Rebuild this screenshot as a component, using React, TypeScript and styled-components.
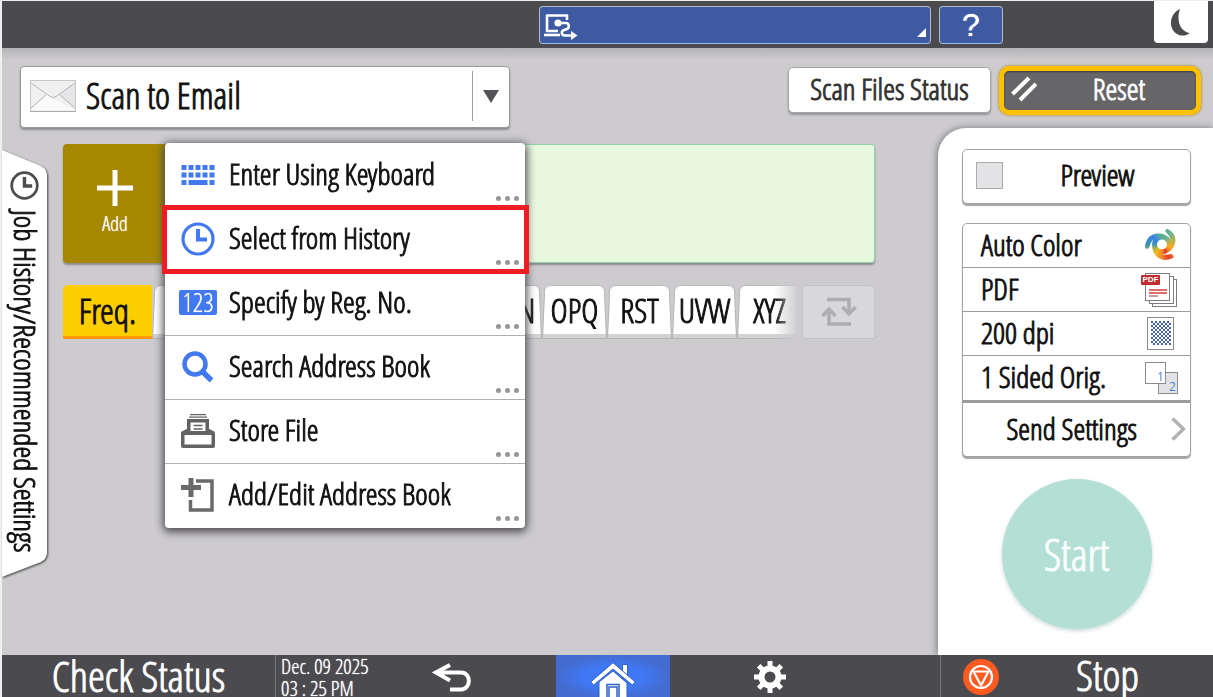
import React from "react";
import styled, { createGlobalStyle } from "styled-components";

const FONT = `"Open Sans Condensed Light", "Roboto Condensed", "Open Sans", sans-serif`;
const BAR = "#4b4a4e";
const BLUE = "#4278f0";

const Global = createGlobalStyle`
  *, *::before, *::after { box-sizing: border-box; }
  body { margin: 0; background: #eef0ef; }
  button, select, input { font: inherit; color: inherit; margin: 0; }
  button { padding: 0; border: 0; background: none; cursor: pointer; }
`;

const Page = styled.div`
  display: flex;
  flex-direction: column;
  height: 100vh;
  min-height: 600px;
  padding: 1px 0 0 2px;
  overflow: hidden;
  font-family: ${FONT};
  font-size: 30px;
  line-height: 40px;
  color: #111;
  -webkit-text-stroke: 1px currentColor;
`;

/* Small labels get a softer weight than the large ones. */
const smallText = `
  -webkit-text-stroke: 0;
  text-shadow: 0 0 1px currentColor;
`;

/* ---------- top bar ---------- */
const TopBar = styled.header`
  display: grid;
  grid-template-columns: 1fr 392px 64px 202px;
  column-gap: 8px;
  align-items: start;
  height: 47px;
  flex: none;
  background: ${BAR};
`;

const BlueButton = styled.button<{ $wide?: boolean }>`
  grid-column: ${(p) => (p.$wide ? 2 : 3)};
  display: flex;
  align-items: ${(p) => (p.$wide ? "stretch" : "center")};
  justify-content: ${(p) => (p.$wide ? "space-between" : "center")};
  height: 38px;
  margin-top: 5px;
  padding: 0 4px;
  border: 1px solid #b9b9c4;
  border-bottom-color: #9db9ee;
  border-radius: 4px;
  background: #3d5aa3;
  color: #fff;
`;

const HelpMark = styled.span`
  font-family: "Liberation Sans", Arial, sans-serif;
  font-size: 32px;
  line-height: 36px;
  ${smallText}
`;

const Corner = styled.span`
  align-self: flex-end;
  width: 9px;
  height: 9px;
  margin-bottom: 6px;
  background: #fff;
  clip-path: polygon(100% 0, 100% 100%, 0 100%);
`;

const SleepButton = styled.button`
  justify-self: end;
  display: grid;
  place-items: center;
  width: 54px;
  height: 42px;
  margin-right: 5px;
  border-radius: 0 0 4px 4px;
  background: #fff;
  color: ${BAR};
`;

/* ---------- main area ---------- */
const Main = styled.main`
  flex: 1;
  min-height: 0;
  display: grid;
  grid-template-columns: minmax(0, 1fr) 275px;
  grid-template-rows: 80px minmax(0, 1fr);
  background: linear-gradient(#b5b4b6, #cdcbce 12px);
`;

const Header = styled.div`
  grid-column: 1 / -1;
  display: flex;
  align-items: flex-start;
  gap: 8px;
  padding: 18px 12px 0 18px;
`;

const ModePicker = styled.label`
  display: flex;
  align-items: center;
  width: 490px;
  height: 62px;
  margin-right: auto;
  padding: 0 0 2px 9px;
  border: 1px solid #98979a;
  border-radius: 4px;
  background: #fff;
  box-shadow: 0 2px 2px #8e8d90;
`;

const ModeSelect = styled.select`
  flex: 1;
  align-self: stretch;
  margin-left: 10px;
  padding: 0;
  border: 0;
  appearance: none;
  background: none;
  font-size: 36px;
`;

const PickerArrow = styled.span`
  display: grid;
  place-items: center;
  width: 37px;
  height: 50px;
  border-left: 1px solid #9c9b9e;
  pointer-events: none;
`;

const StatusButton = styled.button`
  width: 203px;
  height: 46px;
  margin-top: 1px;
  padding-bottom: 3px;
  border: 1px solid #a4a3a6;
  border-radius: 5px;
  background: #fff;
  color: #333;
  box-shadow: 0 2px 2px #979699;
`;

const ResetButton = styled.button`
  display: flex;
  align-items: center;
  width: 202px;
  height: 49px;
  padding: 0 7px 4px;
  border: 5px solid #ffc000;
  border-radius: 10px;
  background: #666567;
  color: #fff;
  box-shadow: 0 0 3px #a07c10, inset 0 1px 2px #3c3c3e;
`;

const ResetLabel = styled.span`
  flex: 1;
  padding-left: 12px;
  text-align: center;
`;

const Work = styled.div`
  display: flex;
  align-items: flex-start;
  min-width: 0;
`;

/* ---------- side tab ---------- */
const SideShadow = styled.div`
  flex: none;
  width: 45px;
  margin-top: 22px;
  filter: drop-shadow(1px 1px 1px #444);
`;

const SideTab = styled.button`
  display: flex;
  align-items: center;
  gap: 10px;
  width: 45px;
  height: 427px;
  padding-top: 21px;
  writing-mode: vertical-rl;
  background: #fff;
  clip-path: polygon(0 0, 39px 16px, 43px 19px, 45px 24px, 45px 404px, 43px 409px, 39px 412px, 0 427px);
`;

/* ---------- destination area ---------- */
const Center = styled.section`
  position: relative;
  flex: 1;
  min-width: 0;
  margin: 16px 63px 0 16px;
`;

const Destination = styled.div`
  display: flex;
  height: 119px;
  border-radius: 4px;
  box-shadow: 0 2px 2px #8c8b8e;
`;

const AddButton = styled.button`
  display: flex;
  flex-direction: column;
  align-items: center;
  width: 104px;
  padding-top: 26px;
  border-radius: 4px 0 0 4px;
  background: #a58800;
  color: #fff;
  font-size: 20px;
  line-height: 36px;
  ${smallText}
`;

const Recipient = styled.div`
  flex: 1;
  border: 1px solid #92cfae;
  border-left: 0;
  border-radius: 0 4px 4px 0;
  background: #e8f8df;
`;

const Tabs = styled.nav`
  display: flex;
  align-items: flex-end;
  height: 54px;
  margin-top: 22px;
  font-size: 33px;
`;

const FreqTab = styled.button`
  flex: none;
  width: 89px;
  height: 54px;
  border-bottom: 3px solid #ff9500;
  border-radius: 5px 0 0 0;
  background: #ffce00;
  font-size: 35px;
  line-height: 51px;
`;

const TabStrip = styled.div`
  display: flex;
  flex: 1;
  min-width: 0;
  height: 54px;
  overflow: hidden;
  mask-image: linear-gradient(to left, transparent 4px, #000 28px);
`;

const LetterTab = styled.button`
  position: relative;
  flex: none;
  width: 65px;
  height: 54px;
  padding-bottom: 3px;
  isolation: isolate;
  line-height: 50px;
  &::before {
    content: "";
    position: absolute;
    inset: -5px 0 0;
    z-index: -1;
    border: 1px solid #b4b3b6;
    border-radius: 7px 7px 0 0;
    background: linear-gradient(to top, #d3d2d3 4px, #fff 4px);
    transform: perspective(100px) rotateX(8deg);
    transform-origin: bottom;
  }
`;

const SwapButton = styled.button`
  display: grid;
  place-items: center;
  flex: none;
  width: 73px;
  height: 54px;
  border: 1px solid #c3c2c4;
  border-radius: 0 5px 0 0;
  background: #d8d7d9;
  color: #aeadb0;
`;

/* ---------- pop-up menu ---------- */
const Menu = styled.ul`
  position: absolute;
  top: -1px;
  left: 102px;
  z-index: 2;
  width: 360px;
  margin: 0;
  padding: 1px 0;
  list-style: none;
  border-radius: 4px;
  background: #fff;
  box-shadow: 0 2px 8px 2px #4d4c50;
`;

const MenuItem = styled.li<{ $marked?: boolean }>`
  position: relative;
  &:not(:last-child) { border-bottom: 1px solid #b1b0b2; }
  ${(p) => p.$marked && `
    &::after {
      content: "";
      position: absolute;
      inset: -3px -4px -3px -3px;
      border: 5px solid #ee1c23;
      pointer-events: none;
    }
  `}
`;

const MenuButton = styled.button`
  display: flex;
  align-items: center;
  gap: 12px;
  width: 100%;
  height: 63px;
  padding: 0 6px 2px 14px;
  text-align: left;
`;

const MenuIcon = styled.span`
  display: grid;
  place-items: center;
  width: 38px;
`;

const MenuLabel = styled.span`
  flex: 1;
  padding-bottom: 2px;
`;

const Dots = styled.span`
  align-self: flex-end;
  display: flex;
  gap: 4px;
  margin-bottom: 4px;
  &::before, &::after, & > i {
    content: "";
    width: 5px;
    height: 5px;
    border-radius: 50%;
    background: #97969a;
  }
`;

const NumberBadge = styled.span`
  width: 38px;
  height: 25px;
  border-radius: 2px;
  background: ${BLUE};
  color: #fff;
  font-size: 26px;
  line-height: 25px;
  text-align: center;
  ${smallText}
`;

/* ---------- right panel ---------- */
const Panel = styled.aside`
  display: flex;
  flex-direction: column;
  align-items: stretch;
  padding: 21px 22px 0 24px;
  border-radius: 28px 0 0 0;
  background: #fff;
  box-shadow: -1px 0 7px #77767a;
`;

const cardFrame = `
  border: 1px solid #a3a2a5;
  border-radius: 5px;
  background: #fff;
  box-shadow: 0 2px 1px #a3a2a5;
`;

const PreviewBox = styled.label`
  display: flex;
  align-items: center;
  height: 55px;
  padding: 0 13px 2px;
  ${cardFrame}
`;

const PreviewCheck = styled.input`
  appearance: none;
  width: 27px;
  height: 27px;
  border: 1px solid #aaa9ac;
  background: #e3e2e4;
`;

const PreviewLabel = styled.span`
  flex: 1;
  padding: 0 0 2px 15px;
  text-align: center;
`;

const Settings = styled.div`
  display: flex;
  flex-direction: column;
  margin-top: 19px;
  ${cardFrame}
`;

const SettingRow = styled.button<{ $last?: boolean }>`
  display: flex;
  align-items: center;
  justify-content: space-between;
  height: ${(p) => (p.$last ? 47 : 44)}px;
  padding: 0 11px 0 18px;
  border-bottom: ${(p) => (p.$last ? 3 : 1)}px solid #9c9b9e;
  & > span:first-child { padding-bottom: 2px; }
`;

const SendRow = styled.button`
  display: flex;
  align-items: center;
  justify-content: flex-end;
  gap: 34px;
  height: 53px;
  padding: 0 4px 2px 0;
`;

const StartButton = styled.button`
  align-self: center;
  width: 150px;
  height: 150px;
  margin-top: 22px;
  border-radius: 50%;
  background: #b4dfd5;
  color: #fafefd;
  font-size: 44px;
  box-shadow: 0 2px 4px #c9dcd8;
`;

/* ---------- bottom bar ---------- */
const BottomBar = styled.footer`
  flex: none;
  display: grid;
  grid-template-columns: 274px 280fr 114px 270fr 273px;
  height: 42px;
  overflow: hidden;
  background: ${BAR};
  color: #fff;
`;

const CheckStatus = styled.button`
  padding-bottom: 2px;
  border-right: 1px solid #777679;
  font-size: 43px;
  line-height: 40px;
`;

const TimeAndBack = styled.div`
  display: flex;
  align-items: center;
  padding-left: 5px;
`;

const Clock = styled.time`
  flex: none;
  width: 141px;
  font-size: 21px;
  line-height: 22px;
  white-space: pre-line;
  ${smallText}
`;

const IconButton = styled.button`
  display: grid;
  place-items: center;
  height: 42px;
  padding: 2px 10px 0;
`;

const HomeButton = styled.button`
  display: grid;
  place-items: end center;
  background: radial-gradient(ellipse, #3f78f5 35%, #446cd0 70%);
`;

const GearCell = styled.div`
  display: grid;
  grid-template-columns: 200px;
  justify-content: start;
`;

const StopButton = styled.button`
  display: flex;
  align-items: center;
  gap: 77px;
  padding: 0 0 0 22px;
  border-left: 1px solid #777679;
  font-size: 43px;
  line-height: 38px;
  & > span { padding-bottom: 4px; }
`;

/* ---------- icons ---------- */
const ClockIcon = ({ size, color }: { size: number; color: string }) => (
  <svg width={size} height={size} viewBox="0 0 34 34" fill="none" stroke={color}>
    <circle cx="17" cy="17" r="15" strokeWidth="3.2" />
    <path d="M17 7v10.500h9" strokeWidth="4" />
  </svg>
);

const NetworkIcon = () => (
  <svg width="36" height="36" viewBox="0 0 36 36" fill="none" stroke="#fff">
    <path d="M23 13v-4.500H3v15.500h11" strokeWidth="2.600" strokeLinejoin="round" />
    <path d="M0 28h16" strokeWidth="2.600" />
    <circle cx="14" cy="16" r="3.600" fill="#fff" stroke="none" />
    <path d="M14 16h8c3.500 0 3.500 5 1 6l-3 1c-3 1-3 5.500 1 5.500h7" strokeWidth="2.600" />
    <path d="M27 24l6.500 4.500-6.500 4.500z" fill="#fff" stroke="none" />
  </svg>
);

const MoonIcon = () => (
  <svg width="20" height="27" viewBox="0 0 20 27">
    <path d="M9 0C-2 5-3 20 6 25c4 2.500 9 2 13-1C9 23 5 11 9 0z" fill={BAR} />
  </svg>
);

const EnvelopeIcon = () => (
  <svg width="46" height="32" viewBox="0 0 46 32" stroke="#b4b3b6" fill="none">
    <rect x=".5" y=".5" width="45" height="31" fill="#f0f0f1" stroke="#c8c7ca" />
    <path d="M1 30L17 14l7 5 21 11z" fill="#fafafa" stroke="none" />
    <path d="M29 15l16 14V3z" fill="#e6e6e8" stroke="none" />
    <path d="M1 3l19 13.500q3 2 6 0L45 3M1 28l15-13M45 28L30 15" />
    <path d="M0 31.500h46" stroke="#aaa" />
  </svg>
);

const StripesIcon = () => (
  <svg width="26" height="26" viewBox="0 0 26 26" stroke="#fff" strokeWidth="4">
    <path d="M1.500 18L18 2M9 24L25 8" />
  </svg>
);

const PlusIcon = () => (
  <svg width="36" height="36" viewBox="0 0 36 36" stroke="#fff" strokeWidth="5">
    <path d="M18 0v36M0 18h36" />
  </svg>
);

const SwapIcon = () => (
  <svg width="36" height="30" viewBox="0 0 36 30" fill="none" stroke="currentColor" strokeWidth="3.500">
    <path d="M6 2.500h22v14M21.500 10l6.500 7 6.500-7M30 27H8V12M1.500 19L8 12l6.500 7" />
  </svg>
);

const KeyboardIcon = () => {
  const xs = [0, 7, 14, 21, 28];
  return (
    <svg width="34" height="20" viewBox="0 0 33 20" fill={BLUE}>
      {xs.map((x) => <rect key={x} x={x} y="0" width="5" height="5" />)}
      {xs.map((x) => <rect key={x} x={x} y="7.500" width="5" height="5" />)}
      <rect x="0" y="15" width="5" height="5" />
      <rect x="7" y="15" width="19" height="5" />
      <rect x="28" y="15" width="5" height="5" />
    </svg>
  );
};

const SearchIcon = () => (
  <svg width="32" height="32" viewBox="0 0 32 32" fill="none" stroke={BLUE}>
    <circle cx="13" cy="13" r="10.500" strokeWidth="4.500" />
    <path d="M20 20l9.500 9.500" strokeWidth="5.500" />
  </svg>
);

const StoreIcon = () => (
  <svg width="34" height="34" viewBox="0 0 34 34" fill="none" stroke="#636265">
    <path d="M9 .700h16M8 3.200h18" strokeWidth="1.300" />
    <path d="M1 20c0-3 2-4 5-5V5h22v10c3 1 5 2 5 5z" fill="#636265" stroke="none" />
    <rect x="0" y="17" width="34" height="17" rx="2" fill="#636265" stroke="none" />
    <rect x="3.500" y="21" width="27" height="9.500" fill="#fff" stroke="none" />
    <path d="M9.500 8.500h15v8.500h-15z" fill="#fff" stroke="none" />
    <path d="M12.500 11.500h9M12.500 15h9" strokeWidth="1.300" />
  </svg>
);

const AddPageIcon = () => (
  <svg width="34" height="34" viewBox="0 0 34 34" fill="none" stroke="#6a696c">
    <path d="M10 0v19M0 9.500h20" strokeWidth="5" />
    <path d="M15 3h16v29H9.500V22" strokeWidth="3.500" />
  </svg>
);

const ColorWheelIcon = styled.span`
  width: 34px;
  height: 34px;
  background: conic-gradient(
    from 0deg at 17px 16px,
    #58ae78, #5fb3a0 30deg, #a9b35c 60deg, #f6a81a 100deg, #f58a20 125deg, #e03a2c 150deg,
    #f0902a 185deg, #f2b822 215deg, #bdb836 240deg, #3f97b0 270deg, #3a7fe6 310deg, #4aa0c0 335deg, #58ae78
  );
  clip-path: path("M7 16a10 10 0 1 1 20 0a10 10 0 1 1 -20 0z M12 16a5 5 0 1 0 10 0a5 5 0 1 0 -10 0z M0 20C0 9 7 4 15 5C19 5 23 8 25 12L17 9C10 7 6 12 4 20z M22 0C31.600 4.800 32.400 13.300 27.500 19.800C25.500 23.200 20.900 25.200 16.500 24.900L23.100 19.500C28.300 14.400 26 8.500 20 2.700z M29 28.700C19.400 34.200 11.600 30.700 8.500 23.200C6.500 19.800 7.100 14.800 9.500 11.100L10.900 19.500C12.700 26.600 19 27.500 27 25.300z");
`;

const PdfTag = styled.span`
  position: absolute;
  top: 4px;
  left: 0;
  width: 19px;
  height: 10px;
  border-radius: 1px;
  background: #c22c30;
  color: #fff;
  font: bold 8px/10px "Liberation Sans", Arial, sans-serif;
  text-align: center;
  -webkit-text-stroke: 0;
`;

const PdfBox = styled.span`
  position: relative;
  display: block;
  width: 38px;
  height: 38px;
`;

const PdfIcon = () => (
  <PdfBox>
    <svg width="38" height="38" viewBox="0 0 38 38" fill="#fff" stroke="#7d7c80">
      <rect x="11.500" y="8.500" width="24" height="27" />
      <rect x="8.500" y="5.500" width="24" height="27" />
      <rect x="4.500" y="2.500" width="24" height="27" />
      <path d="M8 19h18M8 22h18" stroke="#e26b6b" strokeWidth="2" />
      <path d="M8 25h9" stroke="#8c3a3a" />
    </svg>
    <PdfTag>PDF</PdfTag>
  </PdfBox>
);

const DotsIcon = () => (
  <svg width="32" height="33" viewBox="0 0 32 33">
    <rect x=".500" y=".500" width="26" height="32" fill="#fff" stroke="#8b8a8e" />
    {Array.from({ length: 12 }, (_, r) =>
      Array.from({ length: 10 }, (_, c) =>
        (r + c) % 2 === 0 ? <rect key={`${r}-${c}`} x={4 + c * 2} y={4 + r * 2} width="2" height="2" fill="#3f5fae" /> : null
      )
    )}
  </svg>
);

const SidedIcon = () => (
  <svg width="34" height="34" viewBox="0 0 34 34" stroke="#8b8a8e">
    <rect x="13.500" y="11.500" width="19" height="21" fill="#e3e2e4" />
    <rect x=".500" y="1.500" width="20" height="21" fill="#fff" />
    <g fill="#4a86dc" stroke="none" fontFamily="Open Sans, sans-serif" fontSize="12" style={{ WebkitTextStroke: 0 }}>
      <text x="12" y="20">1</text>
      <text x="24" y="30">2</text>
    </g>
  </svg>
);

const ChevronIcon = () => (
  <svg width="15" height="24" viewBox="0 0 15 24" fill="none" stroke="#b2b1b4" strokeWidth="3.500">
    <path d="M1.500 1.500L12.500 12 1.500 22.500" />
  </svg>
);

const BackIcon = () => (
  <svg width="40" height="30" viewBox="0 0 40 30" fill="none" stroke="#fff" strokeWidth="4">
    <path d="M18 2L4 9.500l14 8M5 9.500h24c11 0 10 17 0 17H18" />
  </svg>
);

const HomeIcon = () => (
  <svg width="46" height="37" viewBox="0 0 46 37" fill="#fff" stroke="#2f62c8">
    <path d="M32.500 2.500h5v14h-5z" />
    <path d="M9 20L23 9l14 12v15H9z" />
    <path d="M.700 20L23 .700 45.300 20l-3 3L23 7 3.700 23z" />
    <path d="M17 36V22.500h12V36" strokeWidth="1.500" />
    <path d="M19 36V25h8v11" strokeWidth="1.500" />
  </svg>
);

const GearIcon = () => (
  <svg width="34" height="34" viewBox="0 0 34 34" stroke="#fff" fill="none">
    <circle cx="17" cy="17" r="8.500" strokeWidth="6" />
    {[0, 45, 90, 135].map((a) => (
      <path key={a} d="M17 1v6M17 27v6" strokeWidth="5" transform={`rotate(${a} 17 17)`} />
    ))}
  </svg>
);

const StopIcon = () => (
  <svg width="36" height="36" viewBox="0 0 36 36" fill="none" stroke="#fff" strokeWidth="2.200">
    <circle cx="18" cy="18" r="18" fill="#ff5a20" stroke="none" />
    <circle cx="18" cy="18" r="11" />
    <path d="M10.500 12.500h15L18 26.500z" strokeLinejoin="round" />
  </svg>
);

const menu = [
  { label: "Enter Using Keyboard", icon: <KeyboardIcon /> },
  { label: "Select from History", icon: <ClockIcon size={34} color={BLUE} />, marked: true },
  { label: "Specify by Reg. No.", icon: <NumberBadge>123</NumberBadge> },
  { label: "Search Address Book", icon: <SearchIcon /> },
  { label: "Store File", icon: <StoreIcon /> },
  { label: "Add/Edit Address Book", icon: <AddPageIcon /> },
];

const settings = [
  { label: "Auto Color", icon: <ColorWheelIcon /> },
  { label: "PDF", icon: <PdfIcon /> },
  { label: "200 dpi", icon: <DotsIcon /> },
  { label: "1 Sided Orig.", icon: <SidedIcon /> },
];

/* The first tabs lie under the open menu and show no letters meanwhile. */
const letters = [
  { name: "AB", covered: true },
  { name: "CD", covered: true },
  { name: "EF", covered: true },
  { name: "GH", covered: true },
  { name: "IJK", covered: true },
  { name: "LMN" },
  { name: "OPQ" },
  { name: "RST" },
  { name: "UVW" },
  { name: "XYZ" },
];

export default function App() {
  return (
    <>
      <Global />
      <Page>
        <TopBar>
          <BlueButton $wide aria-label="Connected devices">
            <NetworkIcon />
            <Corner />
          </BlueButton>
          <BlueButton aria-label="Help"><HelpMark>?</HelpMark></BlueButton>
          <SleepButton aria-label="Sleep"><MoonIcon /></SleepButton>
        </TopBar>

        <Main>
          <Header>
            <ModePicker>
              <EnvelopeIcon />
              <ModeSelect aria-label="Scan mode" defaultValue="email">
                <option value="email">Scan to Email</option>
              </ModeSelect>
              <PickerArrow>
                <svg width="18" height="15" viewBox="0 0 18 15" fill="#545357"><path d="M1 1h16L9 14z" /></svg>
              </PickerArrow>
            </ModePicker>
            <StatusButton>Scan Files Status</StatusButton>
            <ResetButton>
              <StripesIcon />
              <ResetLabel>Reset</ResetLabel>
            </ResetButton>
          </Header>

          <Work>
            <SideShadow>
              <SideTab>
                <ClockIcon size={29} color="#4d4c50" />
                Job History/Recommended Settings
              </SideTab>
            </SideShadow>
            <Center>
              <Destination>
                <AddButton><PlusIcon />Add</AddButton>
                <Recipient />
              </Destination>
              <Tabs aria-label="Address book index">
                <FreqTab>Freq.</FreqTab>
                <TabStrip>
                  {letters.map((t) => (
                    <LetterTab key={t.name} aria-label={t.name}>{!t.covered && t.name}</LetterTab>
                  ))}
                </TabStrip>
                <SwapButton aria-label="Switch index"><SwapIcon /></SwapButton>
              </Tabs>
              <Menu>
                {menu.map((m) => (
                  <MenuItem key={m.label} $marked={m.marked}>
                    <MenuButton>
                      <MenuIcon>{m.icon}</MenuIcon>
                      <MenuLabel>{m.label}</MenuLabel>
                      <Dots><i /></Dots>
                    </MenuButton>
                  </MenuItem>
                ))}
              </Menu>
            </Center>
          </Work>

          <Panel>
            <PreviewBox>
              <PreviewCheck type="checkbox" />
              <PreviewLabel>Preview</PreviewLabel>
            </PreviewBox>
            <Settings>
              {settings.map((s, i) => (
                <SettingRow key={s.label} $last={i === settings.length - 1}>
                  <span>{s.label}</span>
                  {s.icon}
                </SettingRow>
              ))}
              <SendRow>Send Settings<ChevronIcon /></SendRow>
            </Settings>
            <StartButton>Start</StartButton>
          </Panel>
        </Main>

        <BottomBar>
          <CheckStatus>Check Status</CheckStatus>
          <TimeAndBack>
            <Clock dateTime="2025-12-09T15:25">{"Dec. 09 2025\n03 : 25 PM"}</Clock>
            <IconButton aria-label="Back"><BackIcon /></IconButton>
          </TimeAndBack>
          <HomeButton aria-label="Home"><HomeIcon /></HomeButton>
          <GearCell>
            <IconButton aria-label="Settings"><GearIcon /></IconButton>
          </GearCell>
          <StopButton><StopIcon /><span>Stop</span></StopButton>
        </BottomBar>
      </Page>
    </>
  );
}
